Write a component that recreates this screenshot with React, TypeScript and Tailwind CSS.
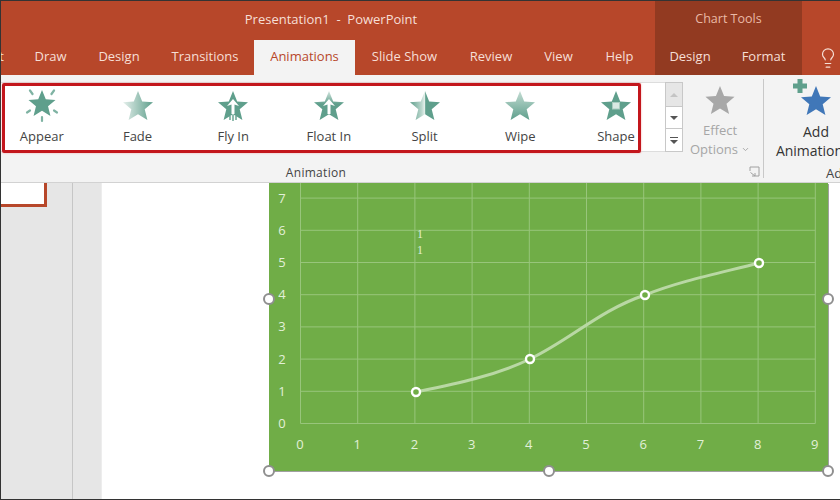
import { ChevronDown, Lightbulb } from "lucide-react";
import type { ReactNode } from "react";

const STAR = "M16 1 L20.2 11.4 L31 12.2 L22.7 19.3 L25.4 30 L16 24.2 L6.6 30 L9.3 19.3 L1 12.2 L11.8 11.4 Z";
const TEAL = "#5f9f8c";

function Star({ size = 32, fill = TEAL, defs, children }: { size?: number; fill?: string; defs?: ReactNode; children?: ReactNode }) {
    return (
        <svg width={size} height={size} viewBox="0 0 32 32">
            {defs && <defs>{defs}</defs>}
            <path d={STAR} fill={fill} />
            {children}
        </svg>
    );
}

function UpArrow() {
    return <path d="M16 9 L22 16 L17.5 14.5 L17.5 24 L14.5 24 L14.5 14.5 L10 16 Z" fill="#ffffff" />;
}

const effects: { label: string; icon: ReactNode }[] = [
    {
        label: "Appear",
        icon: (
            <svg width="34" height="34" viewBox="0 0 34 34">
                <g transform="translate(2.6 0) scale(0.9)">
                    <path d={STAR} fill={TEAL} />
                </g>
                <g stroke="#ffffff" strokeWidth="3">
                    <path d="M6 2 L11 8" />
                    <path d="M28 2 L23 8" />
                    <path d="M2 23 L8 19" />
                    <path d="M32 23 L26 19" />
                </g>
                <g stroke="#7fb3a3" strokeWidth="2.2" strokeLinecap="round">
                    <path d="M5 1.5 L7.5 5" />
                    <path d="M29 1.5 L26.5 5" />
                    <path d="M2 23.5 L5 21.5" />
                    <path d="M32 23.5 L29 21.5" />
                    <path d="M17 28 L17 32" />
                </g>
            </svg>
        ),
    },
    {
        label: "Fade",
        icon: (
            <Star
                fill="url(#fade)"
                defs={
                    <linearGradient id="fade" x1="0" x2="1" y1="0" y2="0">
                        <stop offset="0" stopColor="#e4efeb" />
                        <stop offset="1" stopColor="#5f9f8c" />
                    </linearGradient>
                }
            />
        ),
    },
    {
        label: "Fly In",
        icon: (
            <Star>
                <UpArrow />
                <path d="M13 26 V30 M16 25 V31 M19 26 V30" stroke={TEAL} strokeWidth="1.4" />
            </Star>
        ),
    },
    {
        label: "Float In",
        icon: (
            <Star
                fill="url(#float)"
                defs={
                    <linearGradient id="float" x1="0" x2="0" y1="0" y2="1">
                        <stop offset="0" stopColor="#d5e6e0" />
                        <stop offset="0.45" stopColor="#5f9f8c" />
                    </linearGradient>
                }
            >
                <UpArrow />
            </Star>
        ),
    },
    {
        label: "Split",
        icon: (
            <Star
                fill="url(#split)"
                defs={
                    <linearGradient id="split" x1="0" x2="1" y1="0" y2="0">
                        <stop offset="0" stopColor="#5f9f8c" />
                        <stop offset="0.38" stopColor="#b9d6cc" />
                        <stop offset="0.5" stopColor="#e8f2ee" />
                        <stop offset="0.52" stopColor="#5f9f8c" />
                        <stop offset="1" stopColor="#5f9f8c" />
                    </linearGradient>
                }
            />
        ),
    },
    {
        label: "Wipe",
        icon: (
            <Star
                fill="url(#wipe)"
                defs={
                    <linearGradient id="wipe" x1="0" x2="0" y1="0" y2="1">
                        <stop offset="0" stopColor="#c3dcd3" />
                        <stop offset="1" stopColor="#5f9f8c" />
                    </linearGradient>
                }
            />
        ),
    },
    {
        label: "Shape",
        icon: (
            <Star>
                <rect x="12.5" y="12.5" width="7" height="6.5" fill="#d9e9e3" stroke="#a9cdc0" />
            </Star>
        ),
    },
];

const tabs = [
    { label: "Draw", width: "w-[63px]" },
    { label: "Design", width: "w-[74px]" },
    { label: "Transitions", width: "w-[98px]" },
    { label: "Animations", width: "w-[101px]", active: true },
    { label: "Slide Show", width: "w-[99px]" },
    { label: "Review", width: "w-[74px]" },
    { label: "View", width: "w-[61px]" },
    { label: "Help", width: "w-[61px]" },
];

const xs = [0, 1, 2, 3, 4, 5, 6, 7, 8, 9];
const ys = [0, 1, 2, 3, 4, 5, 6, 7];
const xAt = (v: number) => 300.5 + v * 57.2;
const yAt = (v: number) => 423.5 - v * 32.2;

function LineChart() {
    return (
        <svg className="block" width="559" height="288" viewBox="269 183 559 288">
            <rect x="269" y="183" width="559" height="288" fill="#70ad47" />
            <g stroke="#98c57b" strokeWidth="1">
                {xs.map((v) => (
                    <line key={v} x1={xAt(v)} x2={xAt(v)} y1="183" y2={yAt(0)} />
                ))}
                {ys.map((v) => (
                    <line key={v} x1={xAt(0)} x2={xAt(9)} y1={yAt(v)} y2={yAt(v)} />
                ))}
            </g>
            <g fill="#e2f0d9" fontSize="13" fontFamily="'Open Sans', sans-serif" textAnchor="middle">
                {ys.map((v) => (
                    <text key={v} x="282" y={yAt(v) + 4.5}>{v}</text>
                ))}
                {xs.map((v) => (
                    <text key={v} x={xAt(v) - 0.5} y="449">{v}</text>
                ))}
            </g>
            <g fill="#e2f0d9" fontSize="12" fontFamily="'Liberation Serif', serif" textAnchor="middle">
                <text x="420" y="238">1</text>
                <text x="420" y="254">1</text>
            </g>
            <path
                d="M416 392 C455 384 495 376 530 359 C570 340 600 310 645 295 C680 281 720 273 759 263"
                fill="none"
                stroke="#b9d8a4"
                strokeWidth="3"
            />
            {[[416, 392], [530, 359], [645, 295], [759, 263]].map(([cx, cy]) => (
                <circle key={cx} cx={cx} cy={cy} r="4" fill="#70ad47" stroke="#ffffff" strokeWidth="2.4" />
            ))}
        </svg>
    );
}

function Handle({ className }: { className: string }) {
    return <div className={`absolute w-[12px] h-[12px] rounded-full bg-white border-2 border-[#8f8f8f] ${className}`} />;
}

export default function App() {
    return (
        <div className="w-[840px] h-[500px] overflow-hidden flex flex-col box-border border-t border-b border-l border-[#333333] bg-white font-['Open_Sans',sans-serif] text-[13px]">
            <header className="h-[74px] shrink-0 flex bg-[#b7472a] text-[#f6dfd6]">
                <div className="w-[654px] flex flex-col">
                    <div className="h-[39px] flex items-center justify-center pl-[6px] pb-[2px] whitespace-pre">Presentation1  -  PowerPoint</div>
                    <div className="h-[35px] flex">
                        <div className="w-[18px] overflow-hidden flex justify-end items-center pr-[15px] pb-[1px]">
                            <span className="whitespace-nowrap">Insert</span>
                        </div>
                        {tabs.map((tab) => (
                            <div
                                key={tab.label}
                                className={`${tab.width} flex items-center justify-center pb-[1px] ${tab.active ? "bg-[#f3f3f3] text-[#b7472a]" : ""}`}
                            >
                                {tab.label}
                            </div>
                        ))}
                    </div>
                </div>
                <div className="w-[147px] flex flex-col bg-[#923a21]">
                    <div className="h-[39px] flex items-center justify-center pb-[2px] text-[12.5px] text-[#eab9a5]">Chart Tools</div>
                    <div className="h-[35px] flex">
                        <div className="w-[70px] flex items-center justify-center pb-[1px]">Design</div>
                        <div className="w-[77px] flex items-center justify-center pb-[1px]">Format</div>
                    </div>
                </div>
                <div className="flex-1 flex items-end justify-center pl-[14px] pb-[6px]">
                    <Lightbulb className="w-[22px] h-[22px]" strokeWidth={1.3} />
                </div>
            </header>

            <section className="relative h-[108px] shrink-0 flex bg-[#f3f3f3] border-b border-[#d2d2d2] text-[#444444]">
                <div className="w-[762px] shrink-0 flex flex-col">
                    <div className="h-[84px] pt-[7px] flex">
                        <div className="-ml-[7px] w-[671px] h-[70px] bg-white flex border-y border-[#dddddd]">
                            {effects.map((effect) => (
                                <div key={effect.label} className="w-[95.7px] shrink-0 flex flex-col items-center pt-[5px]">
                                    <div className="h-[35px] flex items-center justify-center">{effect.icon}</div>
                                    <span className="mt-[6px] leading-[14px] whitespace-nowrap">{effect.label}</span>
                                </div>
                            ))}
                        </div>
                        <div className="w-[18px] h-[70px] flex flex-col border border-[#c8c8c8] bg-white text-[#555555]">
                            <div className="h-[24px] bg-[#e6e6e6] border-b border-[#c8c8c8] flex items-center justify-center">
                                <div className="w-0 h-0 border-x-[4px] border-x-transparent border-b-[4px] border-b-[#c4c4c4]" />
                            </div>
                            <div className="h-[22px] border-b border-[#c8c8c8] flex items-center justify-center">
                                <div className="w-0 h-0 border-x-[4px] border-x-transparent border-t-[4px] border-t-[#555555]" />
                            </div>
                            <div className="flex-1 flex flex-col items-center justify-center gap-[2px]">
                                <div className="w-[8px] h-px bg-[#555555]" />
                                <div className="w-0 h-0 border-x-[4px] border-x-transparent border-t-[4px] border-t-[#555555]" />
                            </div>
                        </div>
                        <div className="w-[72px] flex flex-col items-center pl-[2px] pt-[3px] text-[#a6a6a6]">
                            <Star fill="#a8a8a8" />
                            <span className="mt-[5px] leading-[19px]">Effect</span>
                            <span className="leading-[19px] flex items-center gap-[3px]">
                                Options
                                <ChevronDown className="w-[9px] h-[9px]" strokeWidth={2.5} />
                            </span>
                        </div>
                    </div>
                    <div className="relative flex-1 flex items-center justify-center text-[12px] tracking-[0.3px] pt-[5px]">
                        <span className="mr-[132px]">Animation</span>
                        <svg className="absolute right-[3px] top-[7px]" width="11" height="11" viewBox="0 0 11 11" fill="none" stroke="#a0a0a0">
                            <path d="M1 5V1H10V10H6" />
                            <path d="M1.5 6.5L6 10M6 7V10H3" />
                        </svg>
                    </div>
                </div>
                <div className="w-[1px] mt-[4px] mb-[4px] bg-[#c8c8c8] shrink-0" />
                <div className="w-[104px] shrink-0 flex flex-col items-center pt-[2px]">
                    <div className="relative w-[44px] h-[42px] shrink-0">
                        <div className="absolute left-[6px] top-[8px]">
                            <Star size={32} fill="#4077b8" />
                        </div>
                        <svg className="absolute left-[-2px] top-[1px]" width="16" height="16" viewBox="0 0 16 16">
                            <path d="M5.5 1H10.5V5.5H15V10.5H10.5V15H5.5V10.5H1V5.5H5.5Z" fill={TEAL} />
                        </svg>
                    </div>
                    <span className="mt-[3px] leading-[19px] text-[14px] text-[#333333]">Add</span>
                    <span className="leading-[19px] text-[14px] text-[#333333] whitespace-nowrap flex items-center gap-[3px]">
                        Animation
                        <ChevronDown className="w-[10px] h-[10px]" strokeWidth={2} />
                    </span>
                    <span className="absolute left-[825px] top-[89px] text-[13px]">Ad</span>
                </div>
            </section>

            <main className="relative flex-1 flex min-h-0">
                <aside className="w-[72px] shrink-0 bg-[#e6e6e6] border-r border-[#c6c6c6]">
                    <div className="w-[47px] h-[24px] -ml-[1px] bg-white border-r-[3px] border-b-[3px] border-[#b7472a]" />
                </aside>
                <div className="w-[29px] shrink-0 bg-[#e6e6e6] border-r border-[#ededed]" />
                <div className="flex-1 bg-white" />
                <div className="absolute left-[268px] top-0 w-[559px] h-[288px] shadow-[1px_1px_0_#a0a0a0]">
                    <LineChart />
                </div>
                <Handle className="left-[262px] top-[110px]" />
                <Handle className="left-[821px] top-[110px]" />
                <Handle className="left-[262px] top-[282px]" />
                <Handle className="left-[542px] top-[282px]" />
                <Handle className="left-[821px] top-[282px]" />
            </main>

            <div className="absolute left-[2px] top-[83px] w-[639px] h-[70px] border-[3px] border-[#c3161c] rounded-[2px] shadow-[0_0_2px_#f0a0a0]" />
        </div>
    );
}
